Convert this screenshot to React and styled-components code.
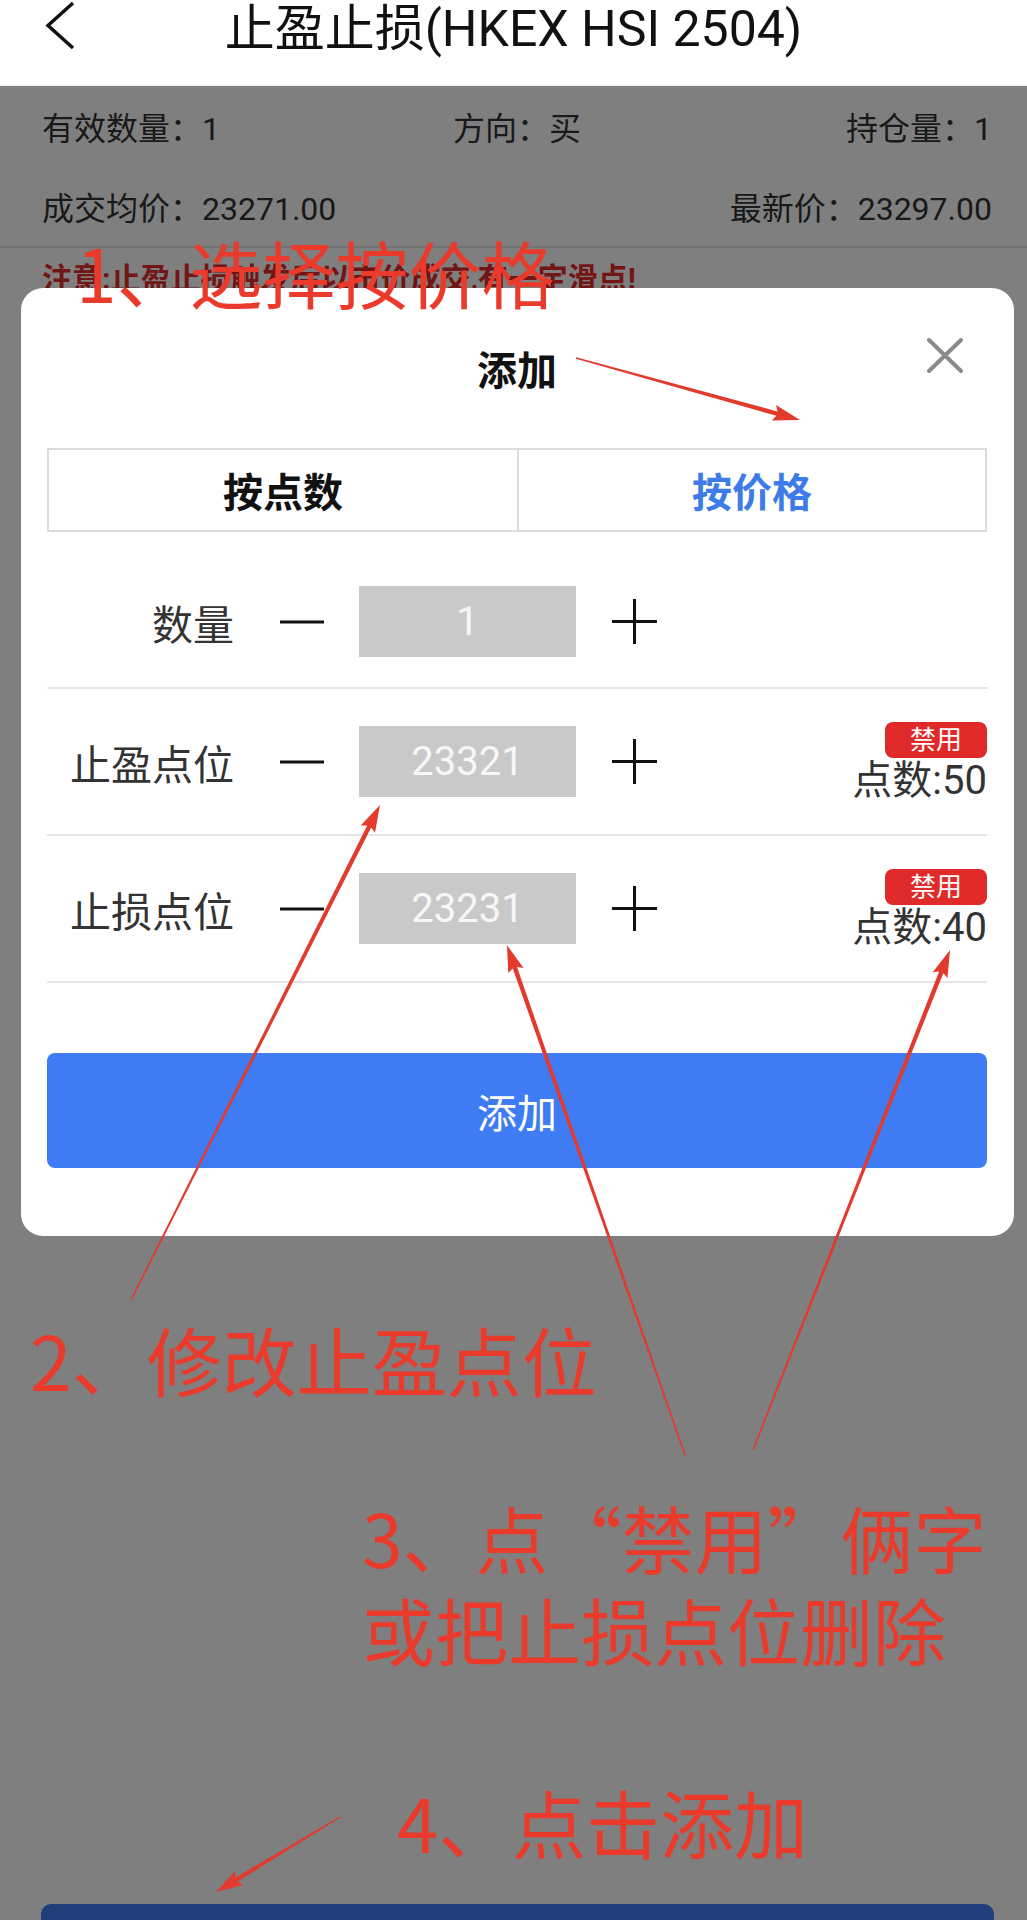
import React from "react";
import styled, { createGlobalStyle } from "styled-components";

const GlobalStyle = createGlobalStyle`
  * { box-sizing: border-box; }
  html, body { margin: 0; padding: 0; }
  body {
    font-family: Roboto, "Noto Sans CJK SC", sans-serif;
    background: #fff;
  }
`;

const Page = styled.div`
  position: relative;
  width: 1027px;
  height: 1920px;
  overflow: hidden;
  display: flex;
  flex-direction: column;
  background: #fff;
`;

const Header = styled.div`
  flex-shrink: 0;
  height: 86px;
  display: grid;
  grid-template-columns: 1fr auto 1fr;
  align-items: start;
  background: #fff;
  border-bottom: 1px solid #eee;
`;

const Back = styled.div`
  padding: 1px 0 0 45px;
  svg { display: block; }
`;

const Title = styled.h1`
  margin: 0;
  padding-top: 2px;
  font-size: 50px;
  font-weight: 400;
  line-height: 54px;
  color: #111;
  white-space: nowrap;
`;

const Body = styled.div`
  position: relative;
  flex: 1;
  display: flex;
  flex-direction: column;
`;

const Info = styled.div`
  border-bottom: 2px solid #e6e6e6;
`;

const InfoRow = styled.div`
  height: 80px;
  display: grid;
  grid-template-columns: 1fr auto 1fr;
  align-items: center;
  padding: 0 35px 0 42px;
  font-size: 32px;
  color: #333;
`;

const Cell = styled.span`
  text-align: ${(p) => p.$align || "left"};
  white-space: nowrap;
`;

const Warning = styled.div`
  padding: 10px 42px;
  font-size: 30px;
  font-weight: 700;
  line-height: 42px;
  color: #e52b2b;
  white-space: nowrap;
`;

const Footer = styled.div`
  margin-top: auto;
  height: 16px;
  overflow: hidden;
  padding: 0 33px 0 41px;
`;

const FooterButton = styled.div`
  height: 110px;
  border-radius: 10px;
  background: #3f7cf4;
`;

const Mask = styled.div`
  position: absolute;
  inset: 0;
  background: rgba(0, 0, 0, 0.5);
  padding: 202px 13px 0 21px;
`;

const Modal = styled.div`
  background: #fff;
  border-radius: 22px;
  padding: 0 27px 68px 26px;
`;

const ModalHead = styled.div`
  position: relative;
  height: 160px;
  display: flex;
  align-items: center;
  justify-content: center;
`;

const ModalTitle = styled.h2`
  margin: 0;
  font-size: 40px;
  font-weight: 700;
  color: #111;
`;

const Close = styled.div`
  position: absolute;
  right: 23px;
  top: 49px;
  svg { display: block; }
`;

const Tabs = styled.div`
  display: grid;
  grid-template-columns: 1fr 1fr;
  height: 84px;
  border: 2px solid #dcdcdc;
`;

const Tab = styled.div`
  display: flex;
  align-items: center;
  justify-content: center;
  font-size: 40px;
  font-weight: 700;
  color: ${(p) => (p.$active ? "#3d7be8" : "#111")};
  & + & { border-left: 2px solid #dcdcdc; }
`;

const Row = styled.div`
  height: ${(p) => (p.$first ? "157px" : "147px")};
  padding-top: ${(p) => (p.$first ? "24px" : "0")};
  display: flex;
  align-items: center;
  border-bottom: 2px solid #e6e6e6;
`;

const Label = styled.div`
  width: 187px;
  margin-right: 46px;
  text-align: right;
  font-size: 41px;
  color: #333;
  white-space: nowrap;
`;

const Step = styled.div`
  display: flex;
  svg { display: block; }
`;

const Field = styled.div`
  width: 217px;
  height: 71px;
  margin: 0 36px 0 35px;
  display: flex;
  align-items: center;
  justify-content: center;
  background: #c9c9c9;
  color: #f7f7f7;
  font-size: 40px;
`;

const Side = styled.div`
  margin-left: auto;
  display: flex;
  flex-direction: column;
  align-items: flex-end;
  gap: 2px;
`;

const Badge = styled.span`
  width: 102px;
  height: 36px;
  display: flex;
  align-items: center;
  justify-content: center;
  border-radius: 8px;
  background: #e02a2a;
  color: #fff;
  font-size: 26px;
  line-height: 1;
`;

const Points = styled.span`
  font-size: 40px;
  line-height: 42px;
  color: #333;
  white-space: nowrap;
`;

const AddButton = styled.div`
  margin-top: 70px;
  height: 115px;
  border-radius: 8px;
  background: #3f7cf4;
  display: flex;
  align-items: center;
  justify-content: center;
  color: #fff;
  font-size: 40px;
`;

const Notes = styled.div`
  position: absolute;
  inset: 0;
  pointer-events: none;
  svg { position: absolute; left: 0; top: 0; }
`;

const Note = styled.div`
  position: absolute;
  left: ${(p) => p.$x}px;
  top: ${(p) => p.$y}px;
  font-family: "Noto Sans CJK SC", sans-serif;
  font-size: ${(p) => p.$size || 73}px;
  line-height: 92px;
  color: #ea3a2c;
  white-space: nowrap;
`;

const BackIcon = () => (
  <svg width="32" height="50" viewBox="0 0 32 50">
    <path d="M28 2 L3 24.5 L28 47" fill="none" stroke="#111" strokeWidth="3.5" />
  </svg>
);

const CloseIcon = () => (
  <svg width="38" height="37" viewBox="0 0 38 37">
    <path d="M3 3 L35 34 M35 3 L3 34" stroke="#8a8a8a" strokeWidth="4" strokeLinecap="round" />
  </svg>
);

const MinusIcon = () => (
  <svg width="44" height="44" viewBox="0 0 44 44">
    <path d="M0 22 H44" stroke="#111" strokeWidth="3" />
  </svg>
);

const PlusIcon = () => (
  <svg width="45" height="45" viewBox="0 0 45 45">
    <path d="M0 22.5 H45 M22.5 0 V45" stroke="#111" strokeWidth="3" />
  </svg>
);

// tapered red annotation arrow, tip at (x2, y2)
const arrowPoints = (x1, y1, x2, y2, w1 = 1.5, w2 = 4.5, hl = 24, hw = 8) => {
  const dx = x2 - x1;
  const dy = y2 - y1;
  const len = Math.hypot(dx, dy);
  const ux = dx / len;
  const uy = dy / len;
  const nx = -uy;
  const ny = ux;
  const bx = x2 - ux * hl;
  const by = y2 - uy * hl;
  const pts = [
    [x1 + (nx * w1) / 2, y1 + (ny * w1) / 2],
    [bx + (nx * w2) / 2, by + (ny * w2) / 2],
    [bx - ux * 3 + nx * hw, by - uy * 3 + ny * hw],
    [x2, y2],
    [bx - ux * 3 - nx * hw, by - uy * 3 - ny * hw],
    [bx - (nx * w2) / 2, by - (ny * w2) / 2],
    [x1 - (nx * w1) / 2, y1 - (ny * w1) / 2],
  ];
  return pts.map((p) => p.map((v) => v.toFixed(1)).join(",")).join(" ");
};

const arrows = [
  [576, 358, 800, 420],
  [131, 1300, 380, 805],
  [685, 1455, 507, 945],
  [753, 1450, 950, 950],
  [340, 1817, 216, 1892],
];

const rows = [
  { label: "数量", value: "1" },
  { label: "止盈点位", value: "23321", points: "50" },
  { label: "止损点位", value: "23231", points: "40" },
];

export default function App() {
  return (
    <Page>
      <GlobalStyle />
      <Header>
        <Back>
          <BackIcon />
        </Back>
        <Title>止盈止损(HKEX HSI 2504)</Title>
        <span />
      </Header>

      <Body>
        <Info>
          <InfoRow>
            <Cell>有效数量：1</Cell>
            <Cell>方向：买</Cell>
            <Cell $align="right">持仓量：1</Cell>
          </InfoRow>
          <InfoRow>
            <Cell>成交均价：23271.00</Cell>
            <Cell />
            <Cell $align="right">最新价：23297.00</Cell>
          </InfoRow>
        </Info>
        <Warning>注意:止盈止损触发后以市价成交,有一定滑点!</Warning>

        <Footer>
          <FooterButton />
        </Footer>

        <Mask>
          <Modal>
            <ModalHead>
              <ModalTitle>添加</ModalTitle>
              <Close>
                <CloseIcon />
              </Close>
            </ModalHead>
            <Tabs>
              <Tab>按点数</Tab>
              <Tab $active>按价格</Tab>
            </Tabs>
            {rows.map((r, i) => (
              <Row key={r.label} $first={i === 0}>
                <Label>{r.label}</Label>
                <Step>
                  <MinusIcon />
                </Step>
                <Field>{r.value}</Field>
                <Step>
                  <PlusIcon />
                </Step>
                {r.points && (
                  <Side>
                    <Badge>禁用</Badge>
                    <Points>点数:{r.points}</Points>
                  </Side>
                )}
              </Row>
            ))}
            <AddButton>添加</AddButton>
          </Modal>
        </Mask>
      </Body>

      <Notes>
        <svg width="1027" height="1920" viewBox="0 0 1027 1920">
          {arrows.map((a, i) => (
            <polygon key={i} points={arrowPoints(...a)} fill="#e23a2c" />
          ))}
        </svg>
        <Note $x={76} $y={225}>1、选择按价格</Note>
        <Note $x={30} $y={1313} $size={75}>2、修改止盈点位</Note>
        <Note $x={362} $y={1490}>
          3、点“禁用”俩字
          <br />
          或把止损点位删除
        </Note>
        <Note $x={397} $y={1775} $size={74}>4、点击添加</Note>
      </Notes>
    </Page>
  );
}
